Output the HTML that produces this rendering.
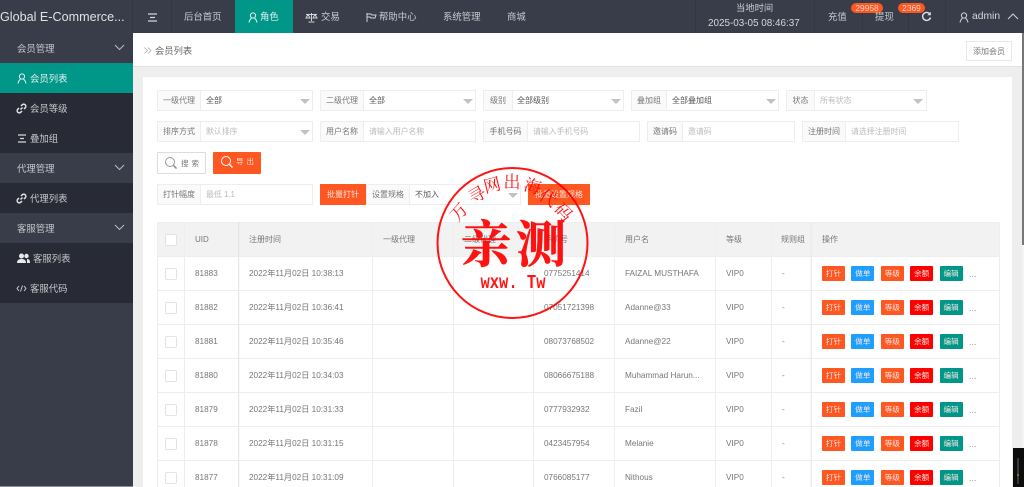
<!DOCTYPE html>
<html lang="zh">
<head>
<meta charset="utf-8">
<title>会员列表</title>
<style>
html,body{margin:0;padding:0;width:1024px;height:487px;overflow:hidden;background:#eee;}
body{position:relative;font-family:"Liberation Sans","Noto Sans CJK SC",sans-serif;font-size:8px;color:#666;}
#root{position:absolute;left:0;top:0;width:1024px;height:487px;overflow:hidden;filter:blur(.35px);}
.a{position:absolute;white-space:nowrap;}
.hd{left:0;top:0;width:1024px;height:33px;background:#393d49;}
.n{position:absolute;top:0;height:33px;line-height:34px;color:#c8cad0;font-size:9.4px;white-space:nowrap;}
.sep{position:absolute;top:0;width:1px;height:33px;background:#33373f;}
.badge{position:absolute;top:3px;height:10px;line-height:10px;background:#ff5722;color:#fbd5c8;border-radius:6px;font-size:8.4px;text-align:center;}
.side{left:0;top:33px;width:133px;height:454px;background:#393d49;}
.si{position:absolute;left:0;width:133px;height:30px;line-height:31px;font-size:9.4px;color:#c6c8cd;}
.si.d{background:#282b35;}
.si.on{background:#009688;color:#e2f2f0;}
.si span{position:absolute;white-space:nowrap;}
.chev{position:absolute;left:114px;top:11px;}
.f{position:absolute;height:21px;box-sizing:border-box;border:1px solid #eee;background:#fff;}
.f i{position:absolute;left:0;top:0;height:19px;line-height:20px;background:#fafafa;border-right:1px solid #eee;font-style:normal;font-size:8px;color:#777;text-align:center;}
.f b{position:absolute;top:0;height:19px;line-height:20px;font-weight:normal;font-size:8px;color:#555;white-space:nowrap;}
.f b.p{color:#bbb;font-size:7.9px;}
.f u{position:absolute;top:8px;width:0;height:0;border:5px solid transparent;border-top:5px solid #c2c2c2;border-bottom:0;text-decoration:none;}
table{position:absolute;left:157px;top:222px;width:842px;border-collapse:collapse;table-layout:fixed;font-size:8.2px;line-height:14px;color:#777;}
th,td{padding:0 0 0 10px;border:1px solid #eee;height:33px;box-sizing:border-box;font-weight:normal;text-align:left;white-space:nowrap;overflow:hidden;}
th{background:#f2f2f2;height:34px;color:#777;font-size:8px;}
td{background:#fff;height:34px;}
.cb{display:block;width:12px;height:12px;box-sizing:border-box;border:1px solid #e3e3e3;border-radius:2px;background:#fff;margin-left:-3px;}
.btn{display:inline-block;width:23px;height:15px;line-height:15px;text-align:center;color:#f2e6e0;font-size:7.6px;border-radius:1px;margin-right:6.4px;vertical-align:middle;}
.o{background:#ff5722}.bl{background:#1e9fff}.r{background:#f00}.g{background:#009688}
.more{color:#999;font-size:9px;position:relative;top:1px;}
</style>
</head>
<body>
<div id="root">

<!-- header -->
<div class="a hd">
  <div class="n" style="left:0;font-size:12.6px;color:#e0e1e4;">Global E-Commerce...</div>
  <div class="sep" style="left:132px"></div>
  <div class="sep" style="left:171px"></div>
  <svg class="a" style="left:147px;top:13px" width="11" height="9" viewBox="0 0 11 9"><path d="M1 1h9M3 4.500h5M1 8h9" stroke="#d5d6da" stroke-width="1.200" fill="none"/></svg>
  <div class="n" style="left:184px">后台首页</div>
  <div class="a" style="left:235px;top:0;width:58px;height:33px;background:#009688"></div>
  <svg class="a" style="left:248px;top:12px" width="10" height="11" viewBox="0 0 10 11"><circle cx="5" cy="3.500" r="2.600" fill="none" stroke="#e2f2f0"/><path d="M1 10.500C1.500 7.500 3 6.500 3.500 6M9 10.500C8.500 7.500 7 6.500 6.500 6" fill="none" stroke="#e2f2f0"/></svg>
  <div class="n" style="left:260px;color:#e2f2f0">角色</div>
  <svg class="a" style="left:305px;top:12px" width="13" height="11" viewBox="0 0 13 11"><path d="M6.500 1v8M3.500 10h6M1 2.500h11M3 2.500L1 6h4zM10 2.500L8 6h4z" stroke="#d0d2d6" fill="none"/></svg>
  <div class="n" style="left:321px">交易</div>
  <svg class="a" style="left:366px;top:12px" width="11" height="11" viewBox="0 0 11 11"><path d="M1 1v9M1 2h4l1 1h4L9 6H5L4 5H1" stroke="#d0d2d6" fill="none"/></svg>
  <div class="n" style="left:379px">帮助中心</div>
  <div class="n" style="left:443px">系统管理</div>
  <div class="n" style="left:507px">商城</div>

  <div class="sep" style="left:695px"></div>
  <div class="sep" style="left:814px"></div>
  <div class="sep" style="left:862px"></div>
  <div class="sep" style="left:908px"></div>
  <div class="sep" style="left:945px"></div>
  <div class="a" style="left:736px;top:2px;line-height:13px;font-size:9.3px;color:#c8cad0">当地时间</div>
  <div class="a" style="left:708px;top:17px;line-height:14px;font-size:9.9px;color:#d5d6da">2025-03-05 08:46:37</div>
  <div class="n" style="left:828px">充值</div>
  <div class="badge" style="left:851px;width:32px">29958</div>
  <div class="n" style="left:875px">提现</div>
  <div class="badge" style="left:898px;width:27px">2369</div>
  <svg class="a" style="left:921px;top:11px" width="11" height="11" viewBox="0 0 11 11"><path d="M9 3.200A4 4 0 1 0 9.500 6.500" fill="none" stroke="#e0e1e4" stroke-width="1.400"/><path d="M9.800 .8v3.400H6.400z" fill="#e0e1e4"/></svg>
  <svg class="a" style="left:959px;top:12px" width="10" height="11" viewBox="0 0 10 11"><circle cx="5" cy="3.500" r="2.600" fill="none" stroke="#d0d2d6"/><path d="M1 10.500C1.500 7.500 3 6.500 3.500 6M9 10.500C8.500 7.500 7 6.500 6.500 6" fill="none" stroke="#d0d2d6"/></svg>
  <div class="n" style="left:972px;font-size:10.3px;color:#d5d6da">admin</div>
  <svg class="a" style="left:1007px;top:13px" width="12" height="7" viewBox="0 0 12 7"><path d="M1 6l5-5 5 5" fill="none" stroke="#d0d2d6"/></svg>
</div>

<!-- sidebar -->
<div class="a side">
  <div class="si" style="top:0"><span style="left:17px">会员管理</span><svg class="chev" width="11" height="7" viewBox="0 0 11 7"><path d="M1 1l4.500 4.500L10 1" fill="none" stroke="#b8bac0"/></svg></div>
  <div class="si on" style="top:30px"><svg class="a" style="left:17px;top:10px" width="10" height="11" viewBox="0 0 10 11"><circle cx="5" cy="3.500" r="2.600" fill="none" stroke="#e2f2f0"/><path d="M1 10.500C1.500 7.500 3 6.500 3.500 6M9 10.500C8.500 7.500 7 6.500 6.500 6" fill="none" stroke="#e2f2f0"/></svg><span style="left:30px">会员列表</span></div>
  <div class="si d" style="top:60px"><svg class="a" style="left:16px;top:10px" width="11" height="11" viewBox="0 0 11 11"><path d="M4.500 6.500l2-2M3 5L1.800 6.200a2 2 0 0 0 3 3L6 8M5 3l1.200-1.200a2 2 0 0 1 3 3L8 6" fill="none" stroke="#e0e1e4" stroke-width="1.500"/></svg><span style="left:30px">会员等级</span></div>
  <div class="si d" style="top:90px"><svg class="a" style="left:17px;top:11px" width="10" height="9" viewBox="0 0 10 9"><path d="M1 1h8M3 4.500h4M1 8h8" stroke="#d5d6da" stroke-width="1.200" fill="none"/></svg><span style="left:30px">叠加组</span></div>
  <div class="si" style="top:120px"><span style="left:17px">代理管理</span><svg class="chev" width="11" height="7" viewBox="0 0 11 7"><path d="M1 1l4.500 4.500L10 1" fill="none" stroke="#b8bac0"/></svg></div>
  <div class="si d" style="top:150px"><svg class="a" style="left:16px;top:10px" width="11" height="11" viewBox="0 0 11 11"><path d="M4.500 6.500l2-2M3 5L1.800 6.200a2 2 0 0 0 3 3L6 8M5 3l1.200-1.200a2 2 0 0 1 3 3L8 6" fill="none" stroke="#e0e1e4" stroke-width="1.500"/></svg><span style="left:30px">代理列表</span></div>
  <div class="si" style="top:180px"><span style="left:17px">客服管理</span><svg class="chev" width="11" height="7" viewBox="0 0 11 7"><path d="M1 1l4.500 4.500L10 1" fill="none" stroke="#b8bac0"/></svg></div>
  <div class="si d" style="top:210px"><svg class="a" style="left:17px;top:10px" width="13" height="10" viewBox="0 0 13 10"><circle cx="4.500" cy="3" r="2.500" fill="#e8e9eb"/><path d="M0 10c0-3 2-4 4.500-4S9 7 9 10z" fill="#e8e9eb"/><circle cx="9.500" cy="3" r="2.200" fill="#e8e9eb"/><path d="M10 10h3c0-3-1-4-3-4z" fill="#e8e9eb"/></svg><span style="left:33px">客服列表</span></div>
  <div class="si d" style="top:240px"><svg class="a" style="left:16px;top:12px" width="11" height="7" viewBox="0 0 11 7"><path d="M3 1L1 3.500 3 6M8 1l2 2.500L8 6M6.500 .5l-2 6" fill="none" stroke="#d5d6da" stroke-width=".9"/></svg><span style="left:30px">客服代码</span></div>
</div>
<div class="a" style="left:0;top:486px;width:133px;height:1px;background:#8b8e97"></div>

<!-- breadcrumb -->
<div class="a" style="left:133px;top:33px;width:889px;height:34px;background:#fff;border-bottom:1px solid #e0e0e0;box-sizing:border-box"></div>
<svg class="a" style="left:144px;top:47px" width="8" height="7" viewBox="0 0 8 7"><path d="M.5 .5l3 3-3 3M4 .5l3 3-3 3" fill="none" stroke="#aaa" stroke-width=".8"/></svg>
<div class="a" style="left:155px;top:44px;line-height:14px;font-size:9.3px;color:#666">会员列表</div>
<div class="a" style="left:966px;top:41px;width:46px;height:20px;box-sizing:border-box;border:1px solid #e8e8e8;background:#fff;text-align:center;line-height:19px;font-size:8px;color:#777">添加会员</div>

<!-- card -->
<div class="a" style="left:143px;top:77px;width:869px;height:410px;background:#fff"></div>
<div class="a" style="left:1022px;top:33px;width:2px;height:212px;background:#777"></div>
<div class="a" style="left:1022px;top:245px;width:2px;height:242px;background:#f4f4f4"></div>
<div class="a" style="left:1013px;top:448px;width:11px;height:39px;background:#0c0c0c"></div>
<div class="a" style="left:1017px;top:458px;width:2px;height:26px;background:#3a3a3a"></div>
<div class="a" style="left:1017px;top:474px;width:2px;height:2px;background:#8a6a20"></div>

<!-- filters row 1 -->
<div class="f" style="left:157px;top:90px;width:156px"><i style="width:42px">一级代理</i><b style="left:48px">全部</b><u style="left:142px"></u></div>
<div class="f" style="left:320px;top:90px;width:156px"><i style="width:42px">二级代理</i><b style="left:48px">全部</b><u style="left:142px"></u></div>
<div class="f" style="left:483px;top:90px;width:141px"><i style="width:28px">级别</i><b style="left:33px">全部级别</b><u style="left:127px"></u></div>
<div class="f" style="left:631px;top:90px;width:148px"><i style="width:34px">叠加组</i><b style="left:40px">全部叠加组</b><u style="left:134px"></u></div>
<div class="f" style="left:786px;top:90px;width:141px"><i style="width:27px">状态</i><b class="p" style="left:33px">所有状态</b><u style="left:126px"></u></div>

<!-- filters row 2 -->
<div class="f" style="left:157px;top:121px;width:156px"><i style="width:42px">排序方式</i><b class="p" style="left:48px">默认排序</b><u style="left:142px"></u></div>
<div class="f" style="left:320px;top:121px;width:156px"><i style="width:42px">用户名称</i><b class="p" style="left:48px">请输入用户名称</b></div>
<div class="f" style="left:483px;top:121px;width:157px"><i style="width:43px">手机号码</i><b class="p" style="left:49px">请输入手机号码</b></div>
<div class="f" style="left:647px;top:121px;width:148px"><i style="width:34px">邀请码</i><b class="p" style="left:40px">邀请码</b></div>
<div class="f" style="left:802px;top:121px;width:157px"><i style="width:42px">注册时间</i><b class="p" style="left:48px">请选择注册时间</b></div>

<!-- buttons -->
<div class="a" style="left:157px;top:152px;width:49px;height:22px;box-sizing:border-box;border:1px solid #ddd;border-radius:1px;background:#fff"></div>
<svg class="a" style="left:164px;top:156px" width="14" height="14" viewBox="0 0 14 14"><circle cx="6" cy="6" r="4.500" fill="none" stroke="#999"/><path d="M9.500 9.500l3 3" stroke="#888" stroke-width="1.500"/></svg>
<div class="a" style="left:181px;top:157px;line-height:14px;font-size:7.5px;letter-spacing:3px;color:#777">搜索</div>
<div class="a" style="left:213px;top:152px;width:48px;height:22px;border-radius:1px;background:#ff5722"></div>
<svg class="a" style="left:220px;top:155px" width="14" height="14" viewBox="0 0 14 14"><circle cx="6" cy="6" r="4.500" fill="none" stroke="#fff"/><path d="M9.500 9.500l3 3" stroke="#fff" stroke-width="1.500"/></svg>
<div class="a" style="left:236px;top:155px;line-height:14px;font-size:7.5px;letter-spacing:3px;color:#fde3da">导出</div>

<!-- filters row 3 -->
<div class="f" style="left:157px;top:184px;width:156px"><i style="width:42px">打针幅度</i><b class="p" style="left:48px">最低 1.1</b></div>
<div class="a" style="left:320px;top:184px;width:46px;height:21px;background:#ff5722;color:#fde3da;text-align:center;line-height:21px;font-size:8px">批量打针</div>
<div class="f" style="left:366px;top:184px;width:155px"><i style="width:42px">设置规格</i><b style="left:48px">不加入</b><u style="left:141px"></u></div>
<div class="a" style="left:528px;top:184px;width:62px;height:21px;background:#ff5722;color:#fde3da;text-align:center;line-height:21px;font-size:8px">批量设置规格</div>

<!-- table -->
<table>
<colgroup><col style="width:27px"><col style="width:54px"><col style="width:134px"><col style="width:81px"><col style="width:80px"><col style="width:81px"><col style="width:101px"><col style="width:56px"><col style="width:40px"><col style="width:188px"></colgroup>
<tr><th><span class="cb" style="background:#fff"></span></th><th>UID</th><th>注册时间</th><th>一级代理</th><th>二级代理</th><th>手机号</th><th>用户名</th><th>等级</th><th style="padding-left:9px">规则组</th><th>操作</th></tr>
<tr><td><span class="cb"></span></td><td>81883</td><td>2022年11月02日 10:38:13</td><td></td><td></td><td>0775251414</td><td>FAIZAL MUSTHAFA</td><td>VIP0</td><td>-</td><td><span class="btn o">打针</span><span class="btn bl">做单</span><span class="btn o">等级</span><span class="btn r">余额</span><span class="btn g">编辑</span><span class="more">...</span></td></tr>
<tr><td><span class="cb"></span></td><td>81882</td><td>2022年11月02日 10:36:41</td><td></td><td></td><td>07051721398</td><td>Adanne@33</td><td>VIP0</td><td>-</td><td><span class="btn o">打针</span><span class="btn bl">做单</span><span class="btn o">等级</span><span class="btn r">余额</span><span class="btn g">编辑</span><span class="more">...</span></td></tr>
<tr><td><span class="cb"></span></td><td>81881</td><td>2022年11月02日 10:35:46</td><td></td><td></td><td>08073768502</td><td>Adanne@22</td><td>VIP0</td><td>-</td><td><span class="btn o">打针</span><span class="btn bl">做单</span><span class="btn o">等级</span><span class="btn r">余额</span><span class="btn g">编辑</span><span class="more">...</span></td></tr>
<tr><td><span class="cb"></span></td><td>81880</td><td>2022年11月02日 10:34:03</td><td></td><td></td><td>08066675188</td><td>Muhammad Harun...</td><td>VIP0</td><td>-</td><td><span class="btn o">打针</span><span class="btn bl">做单</span><span class="btn o">等级</span><span class="btn r">余额</span><span class="btn g">编辑</span><span class="more">...</span></td></tr>
<tr><td><span class="cb"></span></td><td>81879</td><td>2022年11月02日 10:31:33</td><td></td><td></td><td>0777932932</td><td>Fazil</td><td>VIP0</td><td>-</td><td><span class="btn o">打针</span><span class="btn bl">做单</span><span class="btn o">等级</span><span class="btn r">余额</span><span class="btn g">编辑</span><span class="more">...</span></td></tr>
<tr><td><span class="cb"></span></td><td>81878</td><td>2022年11月02日 10:31:15</td><td></td><td></td><td>0423457954</td><td>Melanie</td><td>VIP0</td><td>-</td><td><span class="btn o">打针</span><span class="btn bl">做单</span><span class="btn o">等级</span><span class="btn r">余额</span><span class="btn g">编辑</span><span class="more">...</span></td></tr>
<tr><td><span class="cb"></span></td><td>81877</td><td>2022年11月02日 10:31:09</td><td></td><td></td><td>0766085177</td><td>Nithous</td><td>VIP0</td><td>-</td><td><span class="btn o">打针</span><span class="btn bl">做单</span><span class="btn o">等级</span><span class="btn r">余额</span><span class="btn g">编辑</span><span class="more">...</span></td></tr>
</table>

<!-- fixed column shadows -->
<div class="a" style="left:238px;top:222px;width:2px;height:265px;background:linear-gradient(90deg,#e4e4e4,rgba(228,228,228,0))"></div>
<div class="a" style="left:809px;top:222px;width:3px;height:265px;background:linear-gradient(270deg,rgba(232,232,232,.6),rgba(232,232,232,0))"></div>

<!-- stamp -->
<svg class="a" style="left:430px;top:160px;opacity:.92" width="165" height="165" viewBox="430 160 165 165">
  <circle cx="512.500" cy="243" r="75" fill="none" stroke="#f00" stroke-width="2"/>
  <g font-family="'Noto Serif CJK SC',serif" fill="#f00" text-anchor="middle" font-size="17">
    <text transform="translate(463.500,216) rotate(-48)">万</text>
    <text transform="translate(480,200) rotate(-30)">寻</text>
    <text transform="translate(493.500,191) rotate(-14)">网</text>
    <text transform="translate(512,188)">出</text>
    <text transform="translate(531,192) rotate(16)">海</text>
    <text transform="translate(545,203) rotate(32)">代</text>
    <text transform="translate(559,216) rotate(48)">码</text>
    <text x="486" y="262" font-size="50" font-weight="700" stroke="#f00" stroke-width=".6">亲</text>
    <text x="541" y="262" font-size="50" font-weight="700" stroke="#f00" stroke-width=".6">测</text>
  </g>
  <text transform="translate(513,288) scale(1,1.250)" text-anchor="middle" font-family="'Liberation Mono',monospace" font-weight="700" font-size="15.500" fill="#f00">wxw. Tw</text>
</svg>

</div>
</body>
</html>
